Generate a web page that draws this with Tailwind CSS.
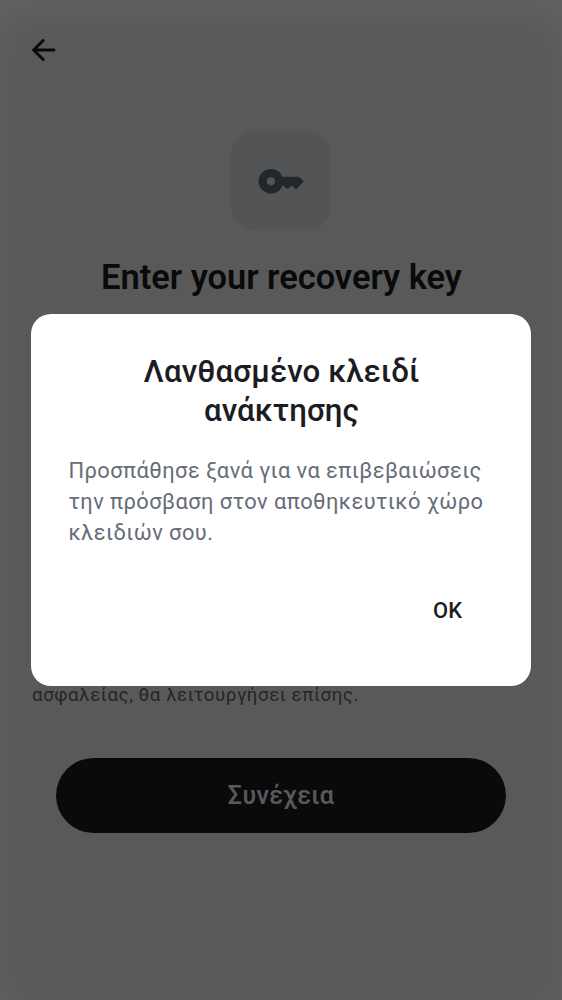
<!DOCTYPE html>
<html lang="el">
<head>
<meta charset="utf-8">
<title>Enter your recovery key</title>
<script src="https://cdn.jsdelivr.net/npm/@tailwindcss/browser@4"></script>
</head>
<body class="relative h-[1000px] w-[562px] overflow-hidden bg-white font-['Roboto',sans-serif] text-[#1b1d22]">
<main class="flex h-full flex-col items-center">
  <header class="flex h-[100px] w-full items-center pl-[30px]">
    <svg class="h-7 w-7" viewBox="0 0 28 28" fill="none" stroke="currentColor" stroke-width="3" stroke-linecap="round" stroke-linejoin="round"><path d="M13.2 4.500 3.600 14l9.600 9.500M3.800 14h20.200"/></svg>
  </header>
  <div class="mt-[31px] flex h-[100px] w-[100px] items-center justify-center rounded-[25px] bg-[#edf0f5]">
    <svg class="mr-px h-[26px] w-[46px] text-[#616f78]" viewBox="0 0 46 26" fill="currentColor"><path fill-rule="evenodd" d="M12.900 .9a12.400 12.400 0 1 0 11.600 16.800h.8l3.300 3.100q.7.6 1.400 0l3.600-3.400 3.600 3.400q.7.6 1.400 0l6.600-6.500q.8-.9 0-1.700L41.500 9.300q-.6-.6-1.600-.6H24.500A12.400 12.400 0 0 0 12.900 .9ZM12.900 9.200a4.100 4.100 0 1 1 0 8.200A4.100 4.100 0 0 1 12.900 9.200Z"/></svg>
  </div>
  <h1 class="mt-[25px] pl-px text-[34.500px] leading-[42px] font-semibold tracking-[-0.040px] whitespace-nowrap">Enter your recovery key</h1>
  <p class="mt-[382px] w-full pl-[32px] text-[18.750px] leading-[30px] tracking-[0.530px] text-[#616f78]">ασφαλείας, θα λειτουργήσει επίσης.</p>
  <button class="mt-[48px] h-[75px] w-[450px] rounded-full bg-[#1b1d22] text-[25px] font-medium tracking-[0.350px] text-white">Συνέχεια</button>
</main>
<div class="absolute inset-0 flex items-center justify-center bg-black/65 shadow-[inset_0_14px_40px_rgba(255,255,255,0.06)]">
  <section role="dialog" class="flex h-[372px] w-[500px] flex-col rounded-[20px] bg-white px-[37.500px] pt-[38px]">
    <h2 class="pl-px text-center text-[31.250px] leading-[39px] font-medium tracking-[0.090px]">Λανθασμένο κλειδί<br>ανάκτησης</h2>
    <p class="mt-[25px] text-[21.900px] leading-[31px] tracking-[0.420px] whitespace-nowrap text-[#656d78]">Προσπάθησε ξανά για να επιβεβαιώσεις<br>την πρόσβαση στον αποθηκευτικό χώρο<br>κλειδιών σου.</p>
    <button class="mt-[47px] mr-[31px] self-end text-[21.900px] leading-[32px] font-medium tracking-[0.3px]">OK</button>
  </section>
</div>
</body>
</html>
